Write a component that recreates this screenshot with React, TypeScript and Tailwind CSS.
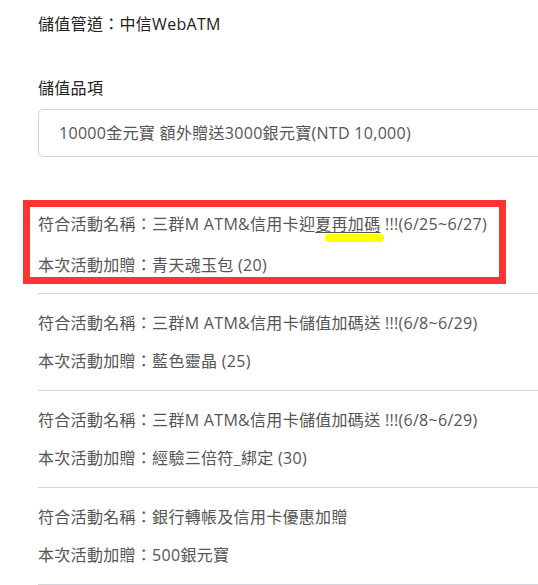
import React from "react";

const promos = [
  { name: "三群M ATM&信用卡儲值加碼送 !!!(6/8~6/29)", gift: "藍色靈晶 (25)" },
  { name: "三群M ATM&信用卡儲值加碼送 !!!(6/8~6/29)", gift: "經驗三倍符_綁定 (30)" },
  { name: "銀行轉帳及信用卡優惠加贈", gift: "500銀元寶" },
];

const App = () => {
  return (
    <div
      className="relative w-[538px] h-[585px] overflow-hidden bg-white text-[16px] leading-[22px] tracking-[0.3px]"
      style={{ fontFamily: '"Open Sans", "Noto Sans CJK TC", sans-serif' }}
    >
      <div className="ml-[38px] w-[520px] pt-[13px]">
        {/* 儲值管道 */}
        <div className="text-[#222]">儲值管道：中信WebATM</div>

        {/* 儲值品項 */}
        <div className="mt-[42px] text-[#222]">儲值品項</div>
        <div className="mt-[10px] h-[48px] flex items-center px-[20px] border border-[#ced4da] rounded-[5px] text-[#555]">
          10000金元寶 額外贈送3000銀元寶(NTD 10,000)
        </div>

        {/* 活動列表 */}
        <div className="mt-[56px] pb-[17px] border-b border-[#d5d5dc] text-[#555]">
          <div>
            符合活動名稱：三群M ATM&amp;信用卡迎
            <span className="relative underline decoration-[#555] underline-offset-[2px]">
              夏再加碼
              <span className="absolute left-[10px] top-[21px] w-[59px] h-[8px] rounded-full bg-[#ffff00]"></span>
            </span>{" "}
            !!!(6/25~6/27)
          </div>
          <div className="mt-[19px]">本次活動加贈：青天魂玉包 (20)</div>
        </div>

        {promos.map((p, i) => (
          <div key={i} className="pt-[18px] pb-[18px] border-b border-[#d5d5dc] text-[#555]">
            <div>符合活動名稱：{p.name}</div>
            <div className="mt-[16px]">本次活動加贈：{p.gift}</div>
          </div>
        ))}
      </div>

      {/* 紅框標示 */}
      <div className="absolute left-[23px] top-[200px] w-[483px] h-[84px] border-[7px] border-[#ff3333] pointer-events-none"></div>
    </div>
  );
};

export default App;
